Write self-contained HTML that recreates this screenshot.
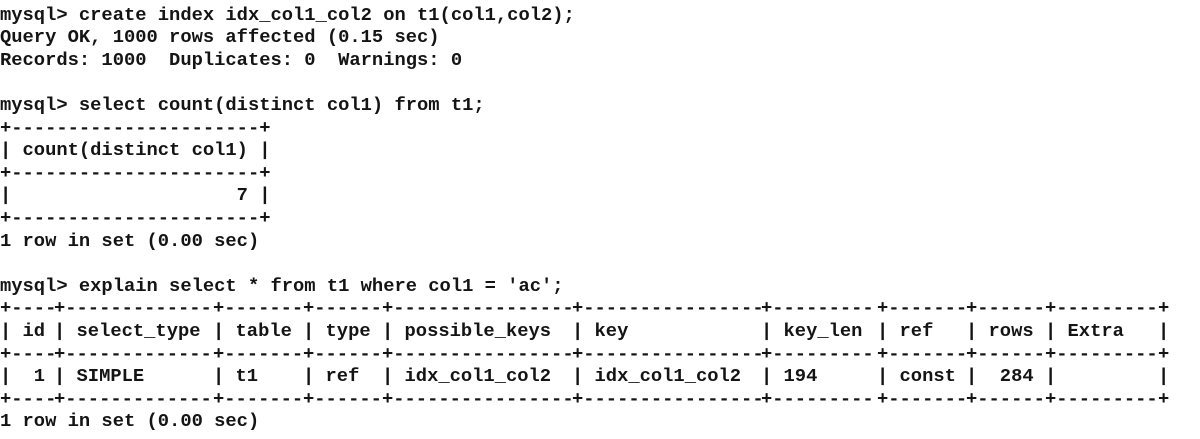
<!DOCTYPE html>
<html><head><meta charset="utf-8"><style>
html,body{margin:0;padding:0;background:#fff;width:1200px;height:439px;overflow:hidden}
.t{position:absolute;left:0;font-family:"Liberation Mono",monospace;font-weight:bold;font-size:18.8px;color:#141414;white-space:pre;line-height:22.6px;height:22.6px;width:1200px}
.t span{position:absolute;top:0}
</style></head><body>
<div class="t" style="top:3.5px">mysql&gt; create index idx_col1_col2 on t1(col1,col2);</div>
<div class="t" style="top:26.1px">Query OK, 1000 rows affected (0.15 sec)</div>
<div class="t" style="top:48.7px">Records: 1000  Duplicates: 0  Warnings: 0</div>
<div class="t" style="top:93.9px">mysql&gt; select count(distinct col1) from t1;</div>
<div class="t" style="top:116.5px">+----------------------+</div>
<div class="t" style="top:139.1px">| count(distinct col1) |</div>
<div class="t" style="top:161.7px">+----------------------+</div>
<div class="t" style="top:184.3px">|                    7 |</div>
<div class="t" style="top:206.9px">+----------------------+</div>
<div class="t" style="top:229.5px">1 row in set (0.00 sec)</div>
<div class="t" style="top:274.7px">mysql&gt; explain select * from t1 where col1 = 'ac';</div>

<div class="t" style="top:297.3px"><span style="left:0">+----</span><span style="left:54px">+-------------</span><span style="left:213px">+-------</span><span style="left:303px">+------</span><span style="left:382px">+----------------</span><span style="left:572px">+----------------</span><span style="left:761px">+---------</span><span style="left:877px">+-------</span><span style="left:966px">+------</span><span style="left:1045px">+---------</span><span style="left:1158px">+</span></div>
<div class="t" style="top:319.9px"><span style="left:0">| id</span><span style="left:54px">| select_type</span><span style="left:213px">| table</span><span style="left:303px">| type</span><span style="left:382px">| possible_keys</span><span style="left:572px">| key</span><span style="left:761px">| key_len</span><span style="left:877px">| ref</span><span style="left:966px">| rows</span><span style="left:1045px">| Extra</span><span style="left:1158px">|</span></div>
<div class="t" style="top:342.5px"><span style="left:0">+----</span><span style="left:54px">+-------------</span><span style="left:213px">+-------</span><span style="left:303px">+------</span><span style="left:382px">+----------------</span><span style="left:572px">+----------------</span><span style="left:761px">+---------</span><span style="left:877px">+-------</span><span style="left:966px">+------</span><span style="left:1045px">+---------</span><span style="left:1158px">+</span></div>
<div class="t" style="top:365.1px"><span style="left:0">|  1</span><span style="left:54px">| SIMPLE</span><span style="left:213px">| t1</span><span style="left:303px">| ref</span><span style="left:382px">| idx_col1_col2</span><span style="left:572px">| idx_col1_col2</span><span style="left:761px">| 194</span><span style="left:877px">| const</span><span style="left:966px">|  284</span><span style="left:1045px">|</span><span style="left:1158px">|</span></div>
<div class="t" style="top:387.7px"><span style="left:0">+----</span><span style="left:54px">+-------------</span><span style="left:213px">+-------</span><span style="left:303px">+------</span><span style="left:382px">+----------------</span><span style="left:572px">+----------------</span><span style="left:761px">+---------</span><span style="left:877px">+-------</span><span style="left:966px">+------</span><span style="left:1045px">+---------</span><span style="left:1158px">+</span></div>
<div class="t" style="top:410.3px">1 row in set (0.00 sec)</div>
</body></html>
